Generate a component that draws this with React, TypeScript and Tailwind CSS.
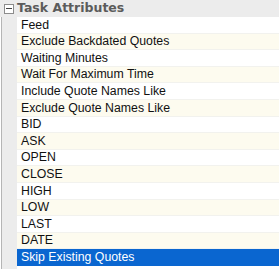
const items = [
  "Feed",
  "Exclude Backdated Quotes",
  "Waiting Minutes",
  "Wait For Maximum Time",
  "Include Quote Names Like",
  "Exclude Quote Names Like",
  "BID",
  "ASK",
  "OPEN",
  "CLOSE",
  "HIGH",
  "LOW",
  "LAST",
  "DATE",
  "Skip Existing Quotes",
]

export default function App() {
  return (
    <div
      className="w-[279px] h-[269px] bg-white overflow-hidden"
      style={{ fontFamily: "'Liberation Sans', Arial, sans-serif" }}
    >
      {/* category header */}
      <div className="flex items-center h-[17px] bg-[#ececec]">
        <div className="w-[17px] flex justify-center">
          <div className="w-[10px] h-[10px] border border-[#8c8c8c] bg-white flex items-center justify-center">
            <div className="w-[6px] h-px bg-[#444]" />
          </div>
        </div>
        <span className="text-[12.5px] font-bold text-[#5b5b5b] leading-none font-['DejaVu_Sans',sans-serif]">
          Task Attributes
        </span>
      </div>

      <div className="flex">
        {/* left gutter */}
        <div className="w-[16px] h-[252px] bg-[#ececec] border-l border-[#b5b5b5] ml-px" />

        <div className="flex-1 flex flex-col">
          {items.map((name, i) => {
            const selected = i === items.length - 1
            return (
              <div
                key={name}
                className={`h-[16.6px] flex items-center pl-[4px] text-[12.3px] leading-none border-b ${
                  selected
                    ? "bg-[#0a66d0] text-white border-[#0a66d0]"
                    : i % 2 === 1
                    ? "bg-[#fdfbef] text-[#111] border-[#f2f2ee]"
                    : "bg-white text-[#111] border-[#f2f2ee]"
                }`}
              >
                {name}
              </div>
            )
          })}
        </div>
      </div>
    </div>
  )
}
